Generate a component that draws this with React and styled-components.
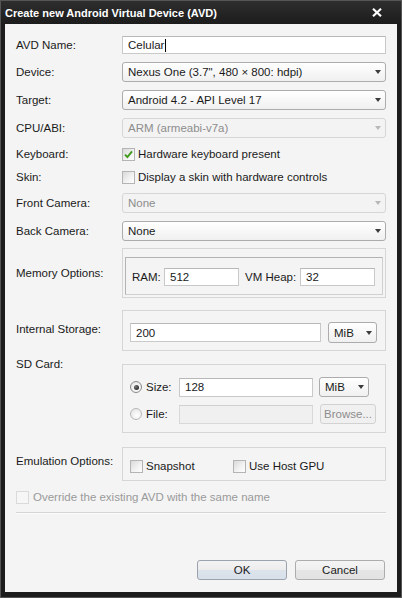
import styled, { createGlobalStyle } from 'styled-components';

const GlobalStyle = createGlobalStyle`
  html, body {
    margin: 0;
    padding: 0;
    background: #1c1c1c;
  }
  body {
    font-family: "Liberation Sans", Arial, sans-serif;
    font-size: 11.5px;
    color: #1a1a1a;
  }
`;

const Window = styled.div`
  width: 402px;
  height: 598px;
  box-sizing: border-box;
  display: flex;
  flex-direction: column;
  background: #1c1c1c;
  border: 1px solid #555;
`;

const TitleBar = styled.div`
  height: 23px;
  flex-shrink: 0;
  display: flex;
  align-items: center;
  justify-content: space-between;
  padding: 0 19px 0 4px;
  color: #fff;
  font-weight: bold;
  font-size: 11px;
  background: linear-gradient(#2e2e2e, #1c1c1c);
`;

const Content = styled.div`
  flex: 1;
  margin: 0 4px 5px 4px;
  padding: 12px 11px 12px 11px;
  background: #f4f4f4;
  display: flex;
  flex-direction: column;
`;

const Row = styled.div`
  display: flex;
  align-items: ${p => p.align || 'center'};
  margin-top: ${p => p.gap || 0}px;
`;

const Label = styled.div`
  width: 106px;
  flex-shrink: 0;
  line-height: 15px;
  margin-top: ${p => p.offset || 0}px;
  color: ${p => (p.disabled ? '#9a9a9a' : 'inherit')};
`;

const Control = styled.div`
  width: 264px;
  display: flex;
  flex-direction: column;
  margin-top: ${p => p.offset || 0}px;
`;

const Select = styled.div`
  box-sizing: border-box;
  height: ${p => p.h || 20}px;
  width: ${p => (p.w ? `${p.w}px` : '100%')};
  flex-shrink: 0;
  display: flex;
  align-items: center;
  justify-content: space-between;
  padding: 0 4px 0 5px;
  border: 1px solid ${p => (p.disabled ? '#d6d6d6' : '#acacac')};
  border-radius: 3px;
  background: ${p => (p.disabled ? '#f3f3f3' : 'linear-gradient(#ffffff, #f0f0f0)')};
  color: ${p => (p.disabled ? '#8d8d8d' : 'inherit')};
  white-space: nowrap;
`;

const Arrow = styled.span`
  width: 0;
  height: 0;
  border-left: 3.5px solid transparent;
  border-right: 3.5px solid transparent;
  border-top: 4px solid ${p => (p.disabled ? '#b8b8b8' : '#3c3c3c')};
`;

const Input = styled.div`
  box-sizing: border-box;
  height: ${p => p.h || 19}px;
  width: ${p => (p.w ? `${p.w}px` : '100%')};
  flex-shrink: 0;
  display: flex;
  align-items: center;
  padding-left: 5px;
  border: 1px solid ${p => (p.disabled ? '#d8d8d8' : '#c9c9c9')};
  border-top-color: ${p => (p.disabled ? '#d0d0d0' : '#b8b8b8')};
  background: ${p => (p.disabled ? '#f0f0f0' : '#fff')};
`;

const Caret = styled.span`
  display: inline-block;
  width: 1px;
  height: 13px;
  background: #000;
  margin-left: 1px;
`;

const CheckItem = styled.div`
  display: flex;
  align-items: center;
  gap: ${p => p.gap || 3}px;
  height: 16px;
  white-space: nowrap;
  width: ${p => (p.w ? `${p.w}px` : 'auto')};
  color: ${p => (p.disabled ? '#9a9a9a' : 'inherit')};
`;

const Box = styled.span`
  box-sizing: border-box;
  width: 13px;
  height: 13px;
  flex-shrink: 0;
  display: inline-flex;
  align-items: center;
  justify-content: center;
  border: 1px solid ${p => (p.disabled ? '#dadada' : '#b4b4b4')};
  background: ${p =>
    p.disabled ? '#f6f6f6' : 'linear-gradient(135deg, #d9d9d9, #f3f3f3 60%, #fdfdfd)'};
`;

const Radio = styled.span`
  box-sizing: border-box;
  width: 12px;
  height: 12px;
  flex-shrink: 0;
  border-radius: 50%;
  display: inline-flex;
  align-items: center;
  justify-content: center;
  border: 1px solid ${p => (p.checked ? '#8a8a8a' : '#b8b8b8')};
  background: radial-gradient(circle at 60% 65%, #ffffff, #e2e2e2);
`;

const Dot = styled.span`
  width: 5px;
  height: 5px;
  border-radius: 50%;
  background: radial-gradient(circle at 35% 35%, #777, #111);
`;

const Group = styled.div`
  box-sizing: border-box;
  width: 264px;
  border: 1px solid #d6d6d6;
  padding: ${p => p.pad};
  display: flex;
  flex-direction: column;
  gap: ${p => p.gap || 0}px;
`;

const InnerPanel = styled.div`
  border: 1px solid #b3b3b3;
  border-right-color: #d0d0d0;
  border-bottom-color: #d0d0d0;
  padding: 10px 6px 8px 6px;
  display: flex;
  align-items: center;
  gap: 6px;
`;

const FieldLabel = styled.span`
  width: ${p => p.w}px;
  flex-shrink: 0;
  white-space: nowrap;
`;

const Line = styled.div`
  display: flex;
  align-items: center;
  gap: ${p => p.gap || 6}px;
`;

const RadioLabel = styled.div`
  width: 43px;
  flex-shrink: 0;
  display: flex;
  align-items: center;
  gap: 4px;
`;

const Button = styled.div`
  box-sizing: border-box;
  width: 90px;
  height: 20px;
  flex-shrink: 0;
  display: flex;
  align-items: center;
  justify-content: center;
  border: 1px solid ${p => (p.primary ? '#9aa3ad' : '#acacac')};
  border-radius: 3px;
  color: ${p => (p.disabled ? '#8d8d8d' : 'inherit')};
  background: ${p =>
    p.primary
      ? 'linear-gradient(#f3f3f3 0%, #ececec 50%, #dce3eb 50%, #d8e0e9 100%)'
      : 'linear-gradient(#f4f4f4 0%, #efefef 50%, #e6e6e6 50%, #e2e2e2 100%)'};
`;

const SmallButton = styled(Button)`
  width: ${p => p.w}px;
  margin-left: 1px;
  background: #f0f0f0;
  border-color: #d2d2d2;
`;

const Separator = styled.div`
  height: 1px;
  background: #d5d5d5;
  border-bottom: 1px solid #fcfcfc;
  margin-top: 7px;
`;

const ButtonBar = styled.div`
  margin-top: auto;
  display: flex;
  justify-content: flex-end;
  gap: 8px;
  padding-right: 1px;
`;

function Check() {
  return (
    <svg width="9" height="9" viewBox="0 0 9 9">
      <path d="M1 4.6 L3.4 7 L8 1.4" fill="none" stroke="#3f9a1c" strokeWidth="1.9" />
    </svg>
  );
}

function CloseIcon() {
  return (
    <svg width="10" height="9" viewBox="0 0 10 9">
      <path d="M1 0.8 L9 8.2 M9 0.8 L1 8.2" stroke="#fff" strokeWidth="2.2" />
    </svg>
  );
}

function Dropdown({ value, disabled, w, h }) {
  return (
    <Select disabled={disabled} w={w} h={h}>
      <span>{value}</span>
      <Arrow disabled={disabled} />
    </Select>
  );
}

export default function App() {
  return (
    <>
      <GlobalStyle />
      <Window>
        <TitleBar>
          <span>Create new Android Virtual Device (AVD)</span>
          <CloseIcon />
        </TitleBar>
        <Content>
          <Row>
            <Label>AVD Name:</Label>
            <Control>
              <Input h={18}>
                Celular
                <Caret />
              </Input>
            </Control>
          </Row>
          <Row gap={8}>
            <Label>Device:</Label>
            <Control>
              <Dropdown value={'Nexus One (3.7", 480 \u00d7 800: hdpi)'} />
            </Control>
          </Row>
          <Row gap={8}>
            <Label>Target:</Label>
            <Control>
              <Dropdown value="Android 4.2 - API Level 17" />
            </Control>
          </Row>
          <Row gap={8}>
            <Label>CPU/ABI:</Label>
            <Control>
              <Dropdown value="ARM (armeabi-v7a)" disabled />
            </Control>
          </Row>
          <Row gap={8}>
            <Label>Keyboard:</Label>
            <CheckItem>
              <Box>
                <Check />
              </Box>
              Hardware keyboard present
            </CheckItem>
          </Row>
          <Row gap={7}>
            <Label>Skin:</Label>
            <CheckItem>
              <Box />
              Display a skin with hardware controls
            </CheckItem>
          </Row>
          <Row gap={8}>
            <Label>Front Camera:</Label>
            <Control>
              <Dropdown value="None" disabled />
            </Control>
          </Row>
          <Row gap={8}>
            <Label>Back Camera:</Label>
            <Control>
              <Dropdown value="None" />
            </Control>
          </Row>
          <Row gap={7}>
            <Label>Memory Options:</Label>
            <Group pad="8px 2px 2px 2px">
              <InnerPanel>
                <FieldLabel w={26}>RAM:</FieldLabel>
                <Input w={75} h={18}>512</Input>
                <FieldLabel w={49}>VM Heap:</FieldLabel>
                <Input w={75} h={18}>32</Input>
              </InnerPanel>
            </Group>
          </Row>
          <Row gap={12} align="flex-start">
            <Label offset={12}>Internal Storage:</Label>
            <Group pad="11px 8px 7px 7px">
              <Line gap={7}>
                <Input w={191}>200</Input>
                <Dropdown value="MiB" w={49} h={21} />
              </Line>
            </Group>
          </Row>
          <Row gap={6} align="flex-start">
            <Label>SD Card:</Label>
            <Control offset={7}>
              <Group pad="12px 9px 8px 7px" gap={7}>
                <Line gap={6}>
                  <RadioLabel>
                    <Radio checked>
                      <Dot />
                    </Radio>
                    Size:
                  </RadioLabel>
                  <Input w={134}>128</Input>
                  <Dropdown value="MiB" w={50} />
                </Line>
                <Line gap={6}>
                  <RadioLabel>
                    <Radio />
                    File:
                  </RadioLabel>
                  <Input w={134} disabled />
                  <SmallButton w={56} disabled>
                    Browse...
                  </SmallButton>
                </Line>
              </Group>
            </Control>
          </Row>
          <Row gap={14} align="flex-start">
            <Label offset={7}>Emulation Options:</Label>
            <Group pad="10px 7px 6px 7px">
              <Line gap={0}>
                <CheckItem w={97}>
                  <Box />
                  Snapshot
                </CheckItem>
                <CheckItem>
                  <Box />
                  Use Host GPU
                </CheckItem>
              </Line>
            </Group>
          </Row>
          <Row gap={8}>
            <CheckItem disabled gap={4}>
              <Box disabled />
              Override the existing AVD with the same name
            </CheckItem>
          </Row>
          <Separator />
          <ButtonBar>
            <Button primary>OK</Button>
            <Button>Cancel</Button>
          </ButtonBar>
        </Content>
      </Window>
    </>
  );
}
